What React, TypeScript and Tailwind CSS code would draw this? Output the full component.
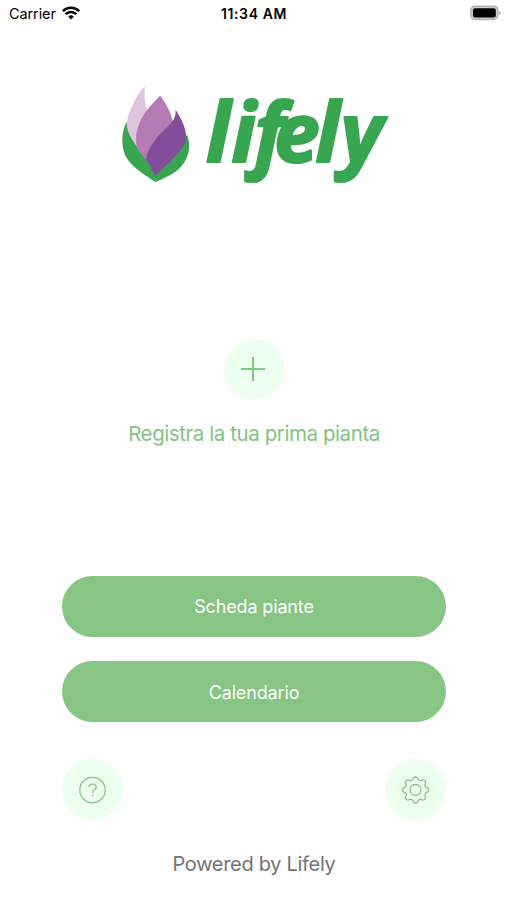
import React from 'react';

function StatusBar() {
  return (
    <header className="grid h-7 grid-cols-3 items-center pl-[9px] pr-1.5 text-black">
      <div className="flex items-center gap-1.5">
        <span className="text-[14.5px] leading-none tracking-[-0.1px]">Carrier</span>
        <svg className="-translate-y-px" width="18" height="14" viewBox="0 0 18 14" fill="none" stroke="currentColor" strokeWidth="2.5">
          <path d="M.8 5.1a11.7 11.7 0 0 1 16.4 0" />
          <path d="M3.7 8.2a7.6 7.6 0 0 1 10.6 0" />
          <path d="M6.2 10.6a4 4 0 0 1 5.6 0L9 13.4z" fill="currentColor" stroke="none" />
        </svg>
      </div>
      <span className="-ml-0.5 text-center text-[14px] font-semibold leading-none tracking-[0.6px] whitespace-nowrap">11:34 AM</span>
      <svg className="-translate-y-px justify-self-end" width="31" height="16" viewBox="0 0 31 16">
        <rect x=".9" y="1.2" width="27" height="13.2" rx="3.8" fill="#ccc" stroke="#b5b5b5" strokeWidth="1.5" />
        <rect x="3" y="3.2" width="22.8" height="9.2" rx="2" fill="#000" />
        <path d="M29.2 5.7q3.3 2.2 0 4.4z" fill="#aaa" />
      </svg>
    </header>
  );
}

function Logo() {
  return (
    <svg className="overflow-visible" width="280" height="124" viewBox="114.5 74 280 124" role="img" aria-label="lifely">
      <path d="M127 122C122 132 122 143 124.3 151.3C128 165 144 174 156 182C167 177 177 173 182 166C189 158 192 147 187.7 134.7L156 174L138 146Z" fill="#38a651" />
      <path d="M145.3 86C138 94 129 110 127 124C128.5 135 133 140 139 149L148 160L150 112C145 108 144.5 97 145.3 86Z" fill="#dfc6df" />
      <path d="M160.7 95.7C152 104 142 115 139 126C136 134 136 143 138 149L148 162L162 148L174 124C171 111 167 104 160.7 95.7Z" fill="#b47bb5" />
      <path d="M176 109.5C177 117 173 122 168 127C158 136 148 147 146.5 159.5L156 176C163 168 183 152 186.5 141C188 130 182 119 176 109.5Z" fill="#824e99" />
      <text
        x="206.5 232 254.5 274.5 316 341"
        y="161.5"
        className="font-['Open_Sans','Noto_Sans',sans-serif] text-[82px] font-bold italic"
        fill="#38a651"
        stroke="#38a651"
        strokeWidth="2.2"
        strokeLinejoin="round"
      >
        lifely
      </text>
    </svg>
  );
}

const gearOutline =
  Array.from({ length: 160 }, (_, i) => {
    const a = (i / 160) * Math.PI * 2;
    const r = 11.7 + 1.35 * Math.tanh(2 * Math.cos(8 * a));
    return `${i ? 'L' : 'M'}${(15 + r * Math.cos(a)).toFixed(2)} ${(15 + r * Math.sin(a)).toFixed(2)}`;
  }).join('') + 'Z';

function RoundButton({ label, children }: { label: string; children: React.ReactNode }) {
  return (
    <button aria-label={label} className="flex size-[61px] items-center justify-center rounded-full bg-[#edffee] text-[#86c583]">
      {children}
    </button>
  );
}

export default function App() {
  return (
    <main className="flex h-[900px] w-[507px] flex-col bg-white font-['Inter',sans-serif]">
      <StatusBar />
      <section className="flex h-[170px] justify-center pt-[46px]">
        <Logo />
      </section>
      <section className="flex flex-col items-center pt-[141px] pl-px">
        <RoundButton label="Aggiungi">
          <svg className="-translate-x-px -translate-y-px" width="26" height="26" viewBox="0 0 26 26" stroke="currentColor" strokeWidth="2">
            <path d="M13 1v24M1 13h24" />
          </svg>
        </RoundButton>
        <p className="mt-5 text-[20.5px] leading-7 tracking-[-0.42px] text-[#82c481] whitespace-nowrap">Registra la tua prima pianta</p>
      </section>
      <section className="mt-[128px] flex flex-col gap-6 px-[62px] text-[18px] tracking-[-0.15px] text-white">
        <button className="h-[61px] w-[384px] rounded-full bg-[#86c583]">Scheda piante</button>
        <button className="h-[61px] w-[384px] rounded-full bg-[#86c583] pt-px">Calendario</button>
      </section>
      <nav className="mt-[37px] flex justify-between pl-[62px] pr-[61px]">
        <RoundButton label="Aiuto">
          <svg className="-translate-x-[0.5px]" width="28" height="28" viewBox="0 0 28 28" fill="none" stroke="currentColor" strokeWidth="1.3">
            <circle cx="14" cy="14" r="12.7" />
            <path d="M10.5 11.4c.1-4.4 7.2-4.2 7.2-.2 0 2.7-3.4 2.6-3.4 5.3v.8" />
            <circle cx="14.3" cy="19.8" r=".45" fill="currentColor" strokeWidth=".8" />
          </svg>
        </RoundButton>
        <RoundButton label="Impostazioni">
          <svg className="-translate-x-[0.5px]" width="30" height="30" viewBox="0 0 30 30" fill="none" stroke="currentColor" strokeWidth="1.3" strokeLinejoin="round">
            <path d={gearOutline} />
            <circle cx="15" cy="15" r="5.5" />
          </svg>
        </RoundButton>
      </nav>
      <footer className="mt-[30px] pl-px text-center text-[20px] leading-7 tracking-[-0.3px] text-[#737373]">Powered by Lifely</footer>
    </main>
  );
}
